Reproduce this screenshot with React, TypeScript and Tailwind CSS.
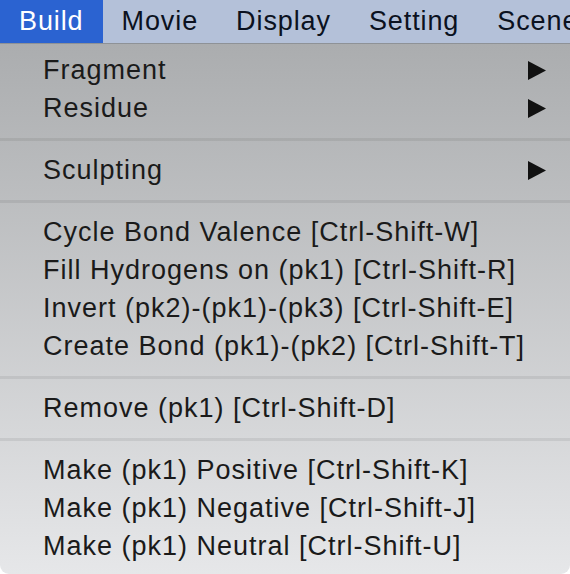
import React from "react";

type Entry = { label: string; sub?: boolean } | "sep";

const menuBar = ["Build", "Movie", "Display", "Setting", "Scene"];

const entries: Entry[] = [
  { label: "Fragment", sub: true },
  { label: "Residue", sub: true },
  "sep",
  { label: "Sculpting", sub: true },
  "sep",
  { label: "Cycle Bond Valence [Ctrl-Shift-W]" },
  { label: "Fill Hydrogens on (pk1) [Ctrl-Shift-R]" },
  { label: "Invert (pk2)-(pk1)-(pk3) [Ctrl-Shift-E]" },
  { label: "Create Bond (pk1)-(pk2) [Ctrl-Shift-T]" },
  "sep",
  { label: "Remove (pk1) [Ctrl-Shift-D]" },
  "sep",
  { label: "Make (pk1) Positive [Ctrl-Shift-K]" },
  { label: "Make (pk1) Negative [Ctrl-Shift-J]" },
  { label: "Make (pk1) Neutral [Ctrl-Shift-U]" },
];

function Arrow() {
  return (
    <svg width="18" height="19" viewBox="0 0 18 19" className="shrink-0">
      <path d="M0 0 L18 9.5 L0 19 Z" fill="#111" />
    </svg>
  );
}

export default function App() {
  return (
    <div
      className="flex h-[574px] w-[570px] flex-col overflow-hidden bg-white"
      style={{ fontFamily: '"Liberation Sans", Arial, sans-serif' }}
    >
      <div className="flex h-[44px] shrink-0 items-stretch overflow-hidden border-b border-[#8e9297] bg-[#b4c1d9] text-[27px] tracking-[0.9px] text-[#0b1120]">
        {menuBar.map((m, i) => (
          <div
            key={m}
            className={`flex shrink-0 items-center whitespace-nowrap px-[19px] ${
              i === 0 ? "bg-[#2b63d1] text-white" : ""
            }`}
          >
            {m}
          </div>
        ))}
      </div>
      <div className="flex flex-1 flex-col rounded-b-[9px] bg-gradient-to-b from-[#abadaf] to-[#e6e7e9] pt-[7px] text-[27px] tracking-[1px] text-[#1a1a1a]">
        {entries.map((e, i) =>
          e === "sep" ? (
            <div key={i} className="mb-[10px] mt-[11px] h-[3px] bg-black/[0.07]" />
          ) : (
            <div
              key={i}
              className="flex h-[38px] items-center justify-between whitespace-nowrap pl-[43px] pr-[24px]"
            >
              <span>{e.label}</span>
              {e.sub && <Arrow />}
            </div>
          ),
        )}
      </div>
    </div>
  );
}
